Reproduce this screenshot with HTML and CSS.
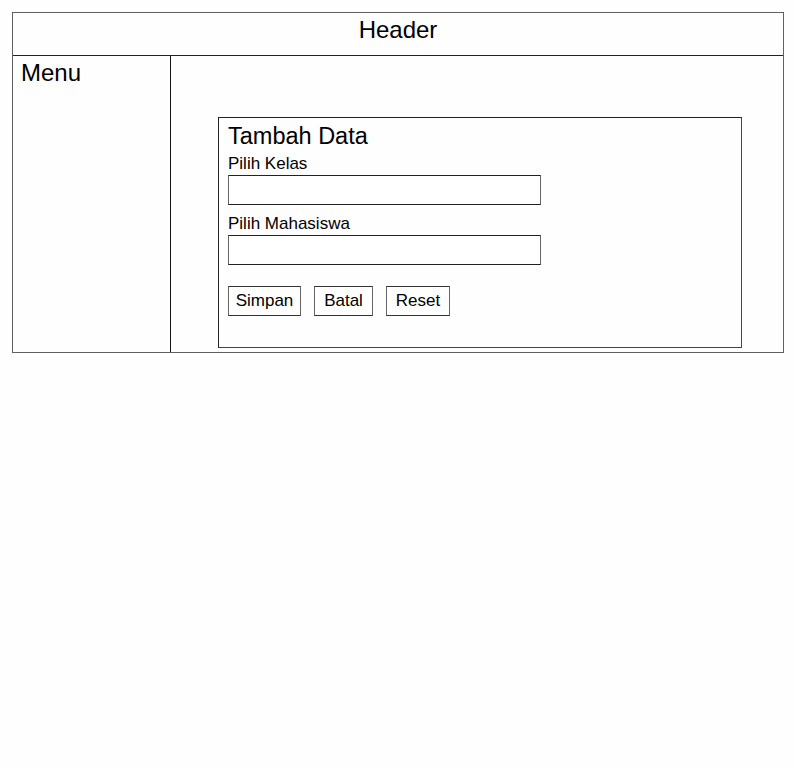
FILE: index.html
```html
<!DOCTYPE html>
<html lang="id">
<head>
<meta charset="utf-8">
<title>Tambah Data</title>
<link rel="stylesheet" href="styles.css">
</head>
<body>
<div class="frame">
  <header class="header">Header</header>
  <div class="main">
    <nav class="menu">Menu</nav>
    <section class="content">
      <form class="card">
        <h1 class="card-title">Tambah Data</h1>
        <label class="field-label">Pilih Kelas</label>
        <div class="field-input"></div>
        <label class="field-label field-label--gap">Pilih Mahasiswa</label>
        <div class="field-input"></div>
        <div class="actions">
          <button type="button" class="btn btn--simpan">Simpan</button>
          <button type="button" class="btn btn--batal">Batal</button>
          <button type="button" class="btn btn--reset">Reset</button>
        </div>
      </form>
    </section>
  </div>
</div>
</body>
</html>
```

FILE: styles.css
```css
* { box-sizing: border-box; }

html, body {
  margin: 0;
  padding: 0;
  background: #fefefe;
}

body {
  font-family: "Liberation Sans", Arial, sans-serif;
  color: #000;
}

.frame {
  margin: 12px;
  width: 772px;
  border: 1px solid #606060;
}

.header {
  height: 43px;
  padding-top: 3px;
  border-bottom: 1px solid #222;
  text-align: center;
  font-size: 24px;
  line-height: 28px;
}

.main {
  display: flex;
}

.menu {
  width: 158px;
  flex: none;
  border-right: 1px solid #111;
  padding: 3px 0 0 8px;
  font-size: 24px;
  line-height: 28px;
}

.content {
  flex: 1;
  padding: 61px 0 4px 47px;
}

.card {
  width: 524px;
  margin: 0;
  padding: 4px 9px 31px 9px;
  border: 1px solid #222;
  border-right-color: #444;
  border-bottom-color: #444;
}

.card-title {
  margin: 0 0 4px 0;
  font-size: 23.5px;
  line-height: 28px;
  font-weight: normal;
}

.field-label {
  display: block;
  font-size: 17px;
  line-height: 20px;
  margin-bottom: 1px;
}

.field-label--gap {
  margin-top: 9px;
}

.field-input {
  width: 313px;
  height: 30px;
  border: 1px solid #222;
  border-left-color: #666;
  border-right-color: #666;
  background: #fff;
}

.actions {
  display: flex;
  gap: 13px;
  margin-top: 21px;
}

.btn {
  height: 30px;
  padding: 0;
  border: 1px solid #333;
  border-left-color: #666;
  border-right-color: #666;
  background: #fff;
  font-family: "Liberation Sans", Arial, sans-serif;
  font-size: 17px;
  color: #000;
  text-align: center;
}

.btn--simpan { width: 73px; }
.btn--batal { width: 59px; }
.btn--reset { width: 64px; }
```
